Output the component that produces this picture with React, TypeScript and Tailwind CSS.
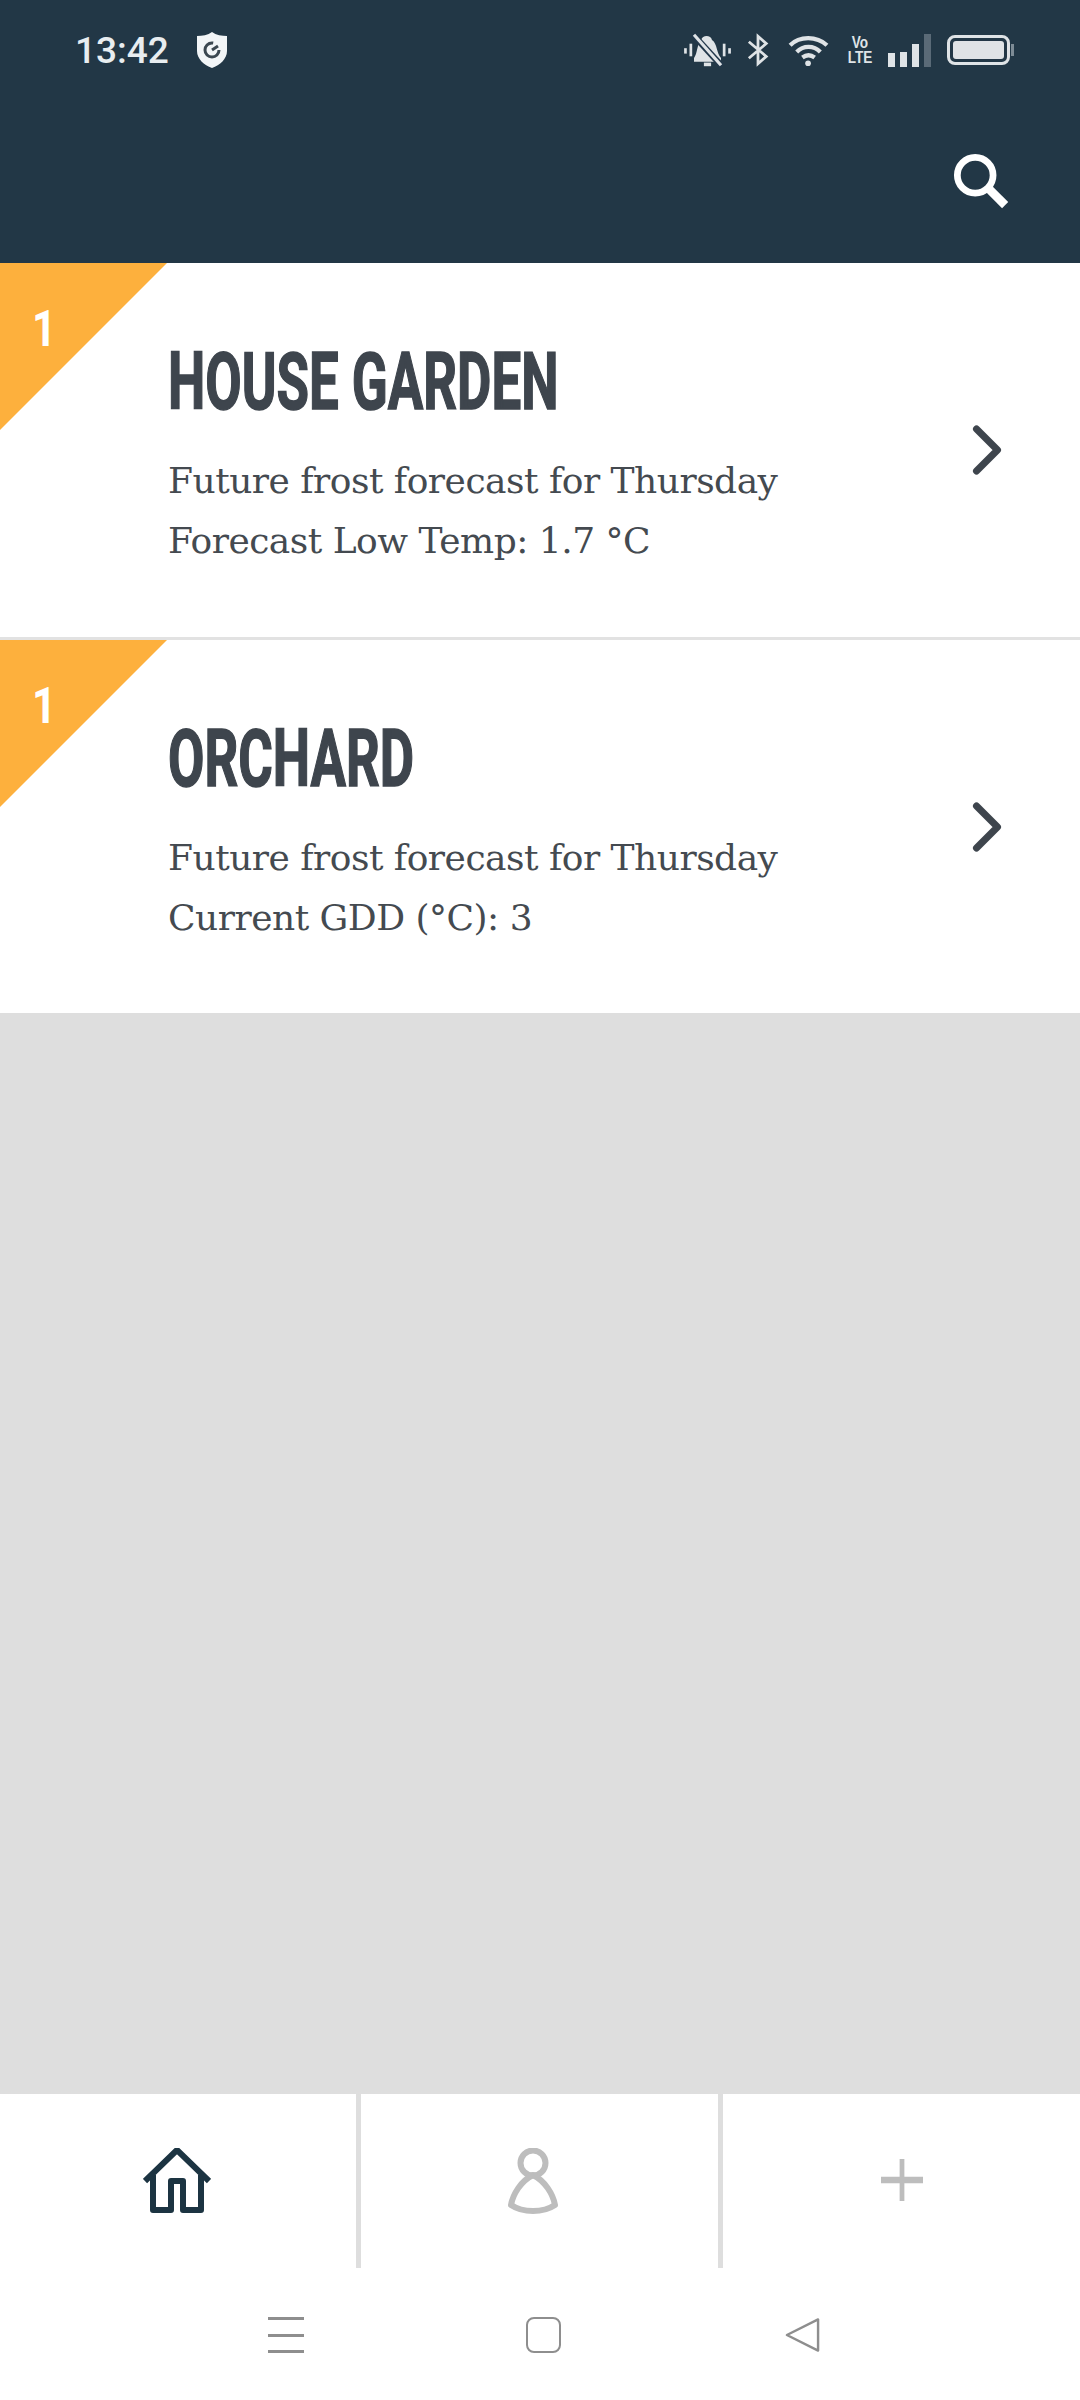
import { ChevronRight } from 'lucide-react'

const titleFont = "font-['Roboto','Liberation_Sans',sans-serif]"
const bodyFont = "font-['DejaVu_Serif','Liberation_Serif',serif]"

function StatusBar() {
  return (
    <div className="flex h-[100px] items-center justify-between pl-[75px] pr-[66px] text-[#e8edf0]">
      <div className="flex items-center gap-[27px]">
        <span className="font-['Roboto',sans-serif] text-[37px] font-medium leading-none">13:42</span>
        <svg width="32" height="38" viewBox="0 0 32 38">
          <path d="M16 1 C20 4 26 5 31 5 V20 C31 28 24 34 16 37 C8 34 1 28 1 20 V5 C6 5 12 4 16 1 Z" fill="#f2f5f7" />
          <circle cx="16" cy="19" r="7" fill="none" stroke="#3b4750" strokeWidth="3" strokeDasharray="34 10" />
          <path d="M16 19 L22 15" stroke="#3b4750" strokeWidth="3" />
        </svg>
      </div>
      <div className="flex items-center">
        <svg width="49" height="36" viewBox="0 0 52 40" className="mr-[15px]" fill="#dfe3e6">
          <path d="M11 29 C15 24 14 14 19 9 C20 3 30 3 31 9 C37 13 36 24 41 29 V33 H11 Z" />
          <rect x="22" y="34" width="8" height="4" />
          <path d="M10 3 L42 38" stroke="#22374a" strokeWidth="7" />
          <path d="M11 3 L41 37" stroke="#dfe3e6" strokeWidth="3.5" />
          <rect x="0" y="18" width="3" height="6" />
          <rect x="6" y="13" width="3" height="14" />
          <rect x="43" y="13" width="3" height="14" />
          <rect x="49" y="18" width="3" height="6" />
        </svg>
        <svg width="22" height="36" viewBox="0 0 24 36" fill="none" stroke="#dfe3e6" strokeWidth="3" className="mr-[19px]">
          <path d="M2 9 L21 25 L12 33 V3 L21 11 L2 27" />
        </svg>
        <svg width="42" height="34" viewBox="0 0 44 36" fill="none" stroke="#dfe3e6" strokeWidth="4.5" className="mr-[18px]">
          <path d="M2 13 C12 3 30 3 41 13" />
          <path d="M9 20 C16 13 27 13 34 20" />
          <path d="M15 26 C19 23 24 23 28 26" />
          <circle cx="21" cy="32" r="3" fill="#dfe3e6" stroke="none" />
        </svg>
        <div className="mr-[16px] flex w-[24px] scale-x-[0.8] flex-col items-center font-['Liberation_Sans',sans-serif] text-[17px] font-bold leading-[15px] text-[#dfe3e6]">
          <div>Vo</div>
          <div>LTE</div>
        </div>
        <div className="mr-[16px] flex h-[33px] items-end gap-[5px]">
          <div className="h-[14px] w-[7px] bg-[#dfe3e6]" />
          <div className="h-[15px] w-[7px] bg-[#dfe3e6]" />
          <div className="h-[23px] w-[7px] bg-[#dfe3e6]" />
          <div className="h-[33px] w-[7px] bg-[#5a6a77]" />
        </div>
        <div className="flex items-center">
          <div className="h-[30px] w-[63px] rounded-[8px] border-[3px] border-[#dfe3e6] p-[3px]">
            <div className="h-full w-full rounded-[3px] bg-[#dfe3e6]" />
          </div>
          <div className="ml-[1px] h-[12px] w-[3px] bg-[#7d8b95]" />
        </div>
      </div>
    </div>
  )
}

function AlertRow({ name, first, second, height }: { name: string; first: string; second: string; height: string }) {
  return (
    <div className={`relative flex ${height} items-center bg-white pl-[168px] pr-[51px]`}>
      <div className="absolute left-0 top-0 h-[167px] w-[167px] bg-[#fdb03d] [clip-path:polygon(0_0,100%_0,0_100%)]" />
      <span className="absolute left-[32px] top-[37px] origin-left scale-x-[0.85] font-['Roboto',sans-serif] text-[50px] font-bold leading-[58px] text-white">1</span>
      <div className="flex-1 pt-[8px]">
        <h2 className={`${titleFont} origin-left scale-x-[0.66] whitespace-nowrap text-[80px] font-bold leading-[90px] text-[#3e454d] [-webkit-text-stroke:1.5px_#3e454d]`}>{name}</h2>
        <p className={`${bodyFont} mt-[24px] whitespace-nowrap text-[36px] leading-[60px] tracking-[-0.5px] text-[#444a50]`}>{first}</p>
        <p className={`${bodyFont} whitespace-nowrap text-[36px] leading-[60px] tracking-[-0.5px] text-[#444a50]`}>{second}</p>
      </div>
      <ChevronRight className="h-[84px] w-[84px] text-[#3e454d]" strokeWidth={2} />
    </div>
  )
}

export default function App() {
  return (
    <div className="flex h-[2400px] w-[1080px] flex-col overflow-hidden bg-[#dedede]">
      <header className="h-[263px] shrink-0 bg-[#223746]">
        <StatusBar />
        <div className="flex justify-end pr-[71px] pt-[53px]">
          <svg width="56" height="56" viewBox="0 0 58 58" fill="none" stroke="white">
            <circle cx="23" cy="23" r="18.5" strokeWidth="7" />
            <path d="M36 36 L54 54" strokeWidth="9" />
          </svg>
        </div>
      </header>
      <AlertRow height="h-[374px]" name="HOUSE GARDEN" first="Future frost forecast for Thursday" second="Forecast Low Temp: 1.7 °C" />
      <div className="h-[3px] shrink-0 bg-[#e2e2e2]" />
      <AlertRow height="h-[373px]" name="ORCHARD" first="Future frost forecast for Thursday" second="Current GDD (°C): 3" />
      <div className="flex-1" />
      <nav className="flex h-[174px] shrink-0 bg-white">
        <div className="flex w-[361px] items-center justify-center border-r-[5px] border-[#dedede] pr-[3px]">
          <svg width="68" height="66" viewBox="0 0 68 66" fill="none" stroke="#1c3442" strokeWidth="6" strokeLinejoin="round">
            <path d="M2 33 L34 2 L66 33 M10 27 V62 H28 V33 H40 V62 H58 V27" />
          </svg>
        </div>
        <div className="flex w-[362px] items-center justify-center border-r-[5px] border-[#dedede] pr-[14px]">
          <svg width="50" height="66" viewBox="0 0 50 66" fill="none" stroke="#bdbdbd" strokeWidth="6">
            <circle cx="25" cy="15" r="12.5" />
            <path d="M25 27 C13 33 5 46 3 57 C15 65 35 65 47 57 C45 46 37 33 25 27 Z" strokeLinejoin="round" />
          </svg>
        </div>
        <div className="flex flex-1 items-center justify-center pb-[2px]">
          <svg width="42" height="42" viewBox="0 0 44 44" stroke="#bdbdbd">
            <path d="M0 22 H44" strokeWidth="7" />
            <path d="M22 0 V44" strokeWidth="5" />
          </svg>
        </div>
      </nav>
      <div className="flex h-[132px] shrink-0 items-start justify-center bg-white pt-[49px]">
        <div className="flex items-center pl-[8px]">
          <div className="flex h-[36px] w-[36px] flex-col justify-between">
            <div className="h-[3px] bg-[#8e8e8e]" />
            <div className="h-[3px] bg-[#8e8e8e]" />
            <div className="h-[3px] bg-[#8e8e8e]" />
          </div>
          <div className="ml-[222px] h-[36px] w-[35px] rounded-[8px] border-[2px] border-[#8e8e8e]" />
          <svg width="37" height="36" viewBox="0 0 38 36" fill="none" stroke="#8e8e8e" strokeWidth="2.5" strokeLinejoin="round" className="ml-[223px]">
            <path d="M35 2 V34 L3 18 Z" />
          </svg>
        </div>
      </div>
    </div>
  )
}
